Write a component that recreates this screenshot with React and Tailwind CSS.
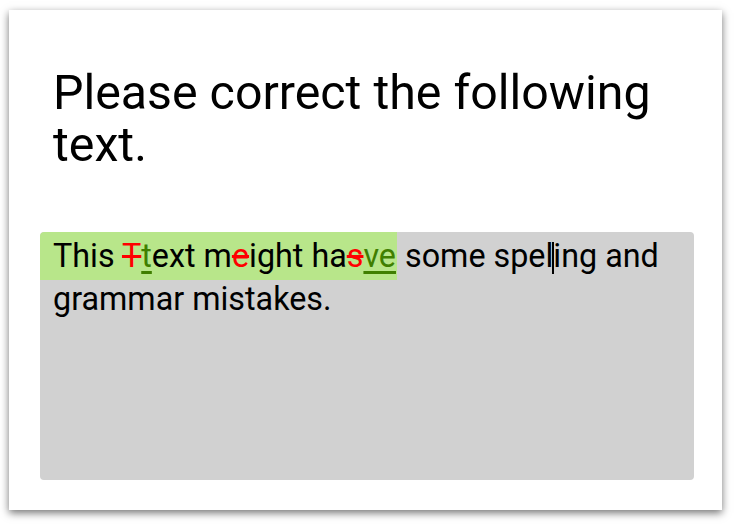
import React from 'react';

const Del = ({ children }) => <span className="text-[#ff0000] line-through decoration-[#ff0000]">{children}</span>;
const Ins = ({ children }) => <span className="text-[#3f7f00] underline decoration-[#3f7f00] underline-offset-[4px]">{children}</span>;

const App = () => {
  return (
    <div className="w-[734px] h-[524px] bg-white pt-[10px] pl-[9px]" style={{ fontFamily: 'Roboto, sans-serif' }}>
      <div className="w-[713px] h-[500px] bg-white shadow-[0_3px_8px_rgba(0,0,0,0.55)] flex flex-col px-[31px]">
        <h1 className="mt-[57px] px-[13px] text-[48.3px] leading-[52px] text-black">Please correct the following text.</h1>
        <div className="mt-[61px] w-[654px] h-[248px] bg-[#d1d1d1] rounded-[4px] overflow-hidden pr-[13px] text-[32.3px] leading-[38px] text-black">
          <span className="inline-block bg-[#b8e68a] pl-[13px] pr-[1px] h-[48px] leading-[48px] rounded-tl-[4px]">
            This <Del>T</Del><Ins>t</Ins>ext m<Del>e</Del>ight ha<Del>s</Del><Ins>ve</Ins>
          </span>{' '}
          some spel<span className="inline-block w-[2px] h-[32px] bg-black align-[-7px] -mx-[1px]" />ing and
          <br />
          <span className="pl-[13px]">grammar mistakes.</span>
        </div>
      </div>
    </div>
  );
};

export default App;
